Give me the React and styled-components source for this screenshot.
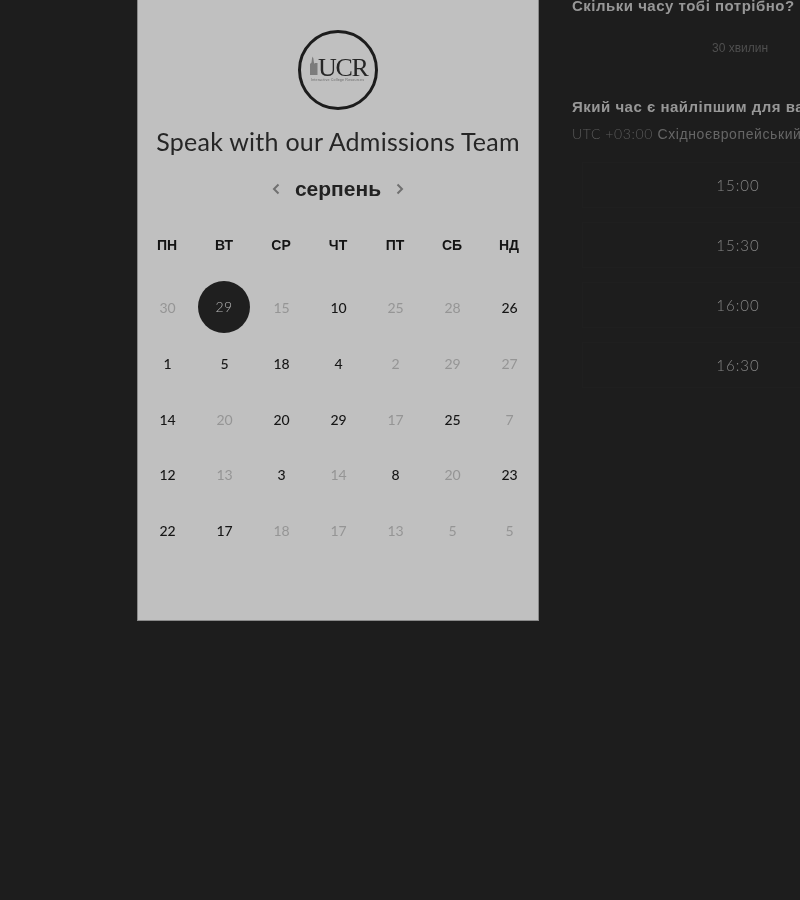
import React from 'react';
import styled, { createGlobalStyle } from 'styled-components';

const GlobalStyle = createGlobalStyle`
  html, body {
    margin: 0;
    padding: 0;
    background: #1d1d1d;
  }
`;

const weekDays = ['ПН', 'ВТ', 'СР', 'ЧТ', 'ПТ', 'СБ', 'НД'];

// m = muted day, s = selected day
const days = [
  ['30', 'm'], ['29', 's'], ['15', 'm'], ['10'], ['25', 'm'], ['28', 'm'], ['26'],
  ['1'], ['5'], ['18'], ['4'], ['2', 'm'], ['29', 'm'], ['27', 'm'],
  ['14'], ['20', 'm'], ['20'], ['29'], ['17', 'm'], ['25'], ['7', 'm'],
  ['12'], ['13', 'm'], ['3'], ['14', 'm'], ['8'], ['20', 'm'], ['23'],
  ['22'], ['17'], ['18', 'm'], ['17', 'm'], ['13', 'm'], ['5', 'm'], ['5', 'm'],
];

const times = ['15:00', '15:30', '16:00', '16:30'];

const Logo = () => (
  <LogoSvg viewBox="0 0 82 82" width="82" height="82">
    <circle cx="41" cy="41" r="38.5" fill="none" stroke="#1c1c1c" strokeWidth="3" />
    <path d="M13 46V35l1.5-1.5.5-4 .7-2 .7 2 .5 4L18 35v-1h2.5v12z" fill="#7c7c7c" />
    <text x="21" y="46.5" fontFamily="Liberation Serif, serif" fontSize="26" letterSpacing="-1.3" fill="#262626">
      UCR
    </text>
    <text x="14" y="52" fontFamily="Liberation Sans, sans-serif" fontSize="3.6" letterSpacing="0.18" fill="#6a6a6a">
      Interactive College Resources
    </text>
  </LogoSvg>
);

const Chevron = ({ flip }) => (
  <ChevronSvg viewBox="0 0 8 12" width="8" height="12">
    <path
      d={flip ? 'M1.5 1.5L6 6l-4.5 4.5' : 'M6.5 1.5L2 6l4.5 4.5'}
      fill="none"
      stroke="#707070"
      strokeWidth="2"
    />
  </ChevronSvg>
);

const App = () => {
  return (
    <Page>
      <GlobalStyle />
      <Panel>
        <Logo />
        <Title>Speak with our Admissions Team</Title>
        <MonthBar>
          <Chevron />
          <Month>серпень</Month>
          <Chevron flip />
        </MonthBar>
        <WeekRow>
          {weekDays.map((day) => (
            <WeekDay key={day}>{day}</WeekDay>
          ))}
        </WeekRow>
        <DayGrid>
          {days.map(([value, kind], index) => (
            <Day key={index} $muted={kind === 'm'}>
              {kind === 's' ? <Selected>{value}</Selected> : value}
            </Day>
          ))}
        </DayGrid>
      </Panel>
      <Side>
        <Question>Скільки часу тобі потрібно?</Question>
        <Duration>30 хвилин</Duration>
        <Question>Який час є найліпшим для вас?</Question>
        <Zone>
          <ZoneOffset>UTC +03:00</ZoneOffset> Східноєвропейський час
        </Zone>
        <Slots>
          {times.map((time) => (
            <Slot key={time}>{time}</Slot>
          ))}
        </Slots>
      </Side>
    </Page>
  );
};

const Page = styled.div`
  width: 800px;
  height: 900px;
  display: flex;
  align-items: flex-start;
  padding-left: 137px;
  box-sizing: border-box;
  overflow: hidden;
  background: #1d1d1d;
  filter: grayscale(1);
`;

const Panel = styled.div`
  flex: none;
  width: 402px;
  height: 621px;
  box-sizing: border-box;
  padding-top: 29px;
  display: flex;
  flex-direction: column;
  align-items: center;
  background: #c0c0c0;
  border: 1px solid #8a8a8a;
  border-top: none;
`;

const LogoSvg = styled.svg`
  display: block;
  flex: none;
`;

const Title = styled.h1`
  margin: 12px 0 0;
  font-family: Lato, sans-serif;
  font-weight: 400;
  font-size: 25px;
  line-height: 36px;
  letter-spacing: 0.25px;
  white-space: nowrap;
  color: #262626;
`;

const MonthBar = styled.div`
  margin-top: 15px;
  height: 30px;
  display: flex;
  align-items: center;
  justify-content: center;
  gap: 15px;
`;

const ChevronSvg = styled.svg`
  display: block;
`;

const Month = styled.span`
  font-family: 'Liberation Sans', sans-serif;
  font-weight: 700;
  font-size: 21px;
  line-height: 30px;
  color: #222;
`;

const WeekRow = styled.div`
  width: 399px;
  margin-top: 31px;
  display: grid;
  grid-template-columns: repeat(7, 57px);
`;

const WeekDay = styled.div`
  font-family: 'Liberation Sans', sans-serif;
  font-weight: 700;
  font-size: 14px;
  line-height: 20px;
  text-align: center;
  color: #141414;
`;

const DayGrid = styled.div`
  width: 399px;
  margin-top: 25px;
  display: grid;
  grid-template-columns: repeat(7, 57px);
  grid-auto-rows: 55.7px;
`;

const Day = styled.div`
  display: flex;
  align-items: center;
  justify-content: center;
  padding-left: 1px;
  font-family: Lato, sans-serif;
  font-size: 14px;
  font-weight: ${(p) => (p.$muted ? 400 : 500)};
  color: ${(p) => (p.$muted ? '#959595' : '#161616')};
`;

const Selected = styled.span`
  flex: none;
  width: 52px;
  height: 52px;
  margin: -2px 0 0 -1px;
  border-radius: 50%;
  display: flex;
  align-items: center;
  justify-content: center;
  background: #1f1f1f;
  color: #b8b8b8;
  font-weight: 300;
  font-size: 14px;
  letter-spacing: 0.5px;
`;

const Side = styled.div`
  flex: none;
  width: 400px;
  margin: -4px 0 0 33px;
  color: #999;
`;

const Question = styled.div`
  font-family: 'Liberation Sans', sans-serif;
  font-weight: 700;
  font-size: 15px;
  line-height: 20px;
  letter-spacing: 0.5px;
  white-space: nowrap;
  color: #979797;
`;

const Duration = styled.div`
  width: 336px;
  margin: 22px 0 39px;
  font-family: 'Liberation Sans', sans-serif;
  font-size: 12px;
  line-height: 20px;
  text-align: center;
  color: #4f4f4f;
`;

const Zone = styled.div`
  margin-top: 7px;
  font-family: 'Liberation Sans', sans-serif;
  font-size: 14px;
  line-height: 20px;
  letter-spacing: 0.6px;
  white-space: nowrap;
  color: #666;
`;

const ZoneOffset = styled.span`
  font-family: Lato, sans-serif;
  font-weight: 300;
  color: #5a5a5a;
`;

const Slots = styled.div`
  margin: 18px 0 0 10px;
  width: 312px;
  display: grid;
  grid-auto-rows: 46px;
  row-gap: 14px;
`;

const Slot = styled.div`
  display: flex;
  align-items: center;
  justify-content: center;
  border: 1px solid #1f1f1f;
  font-family: Lato, sans-serif;
  font-weight: 300;
  font-size: 15px;
  letter-spacing: 1px;
  color: #858585;
`;

export default App;
